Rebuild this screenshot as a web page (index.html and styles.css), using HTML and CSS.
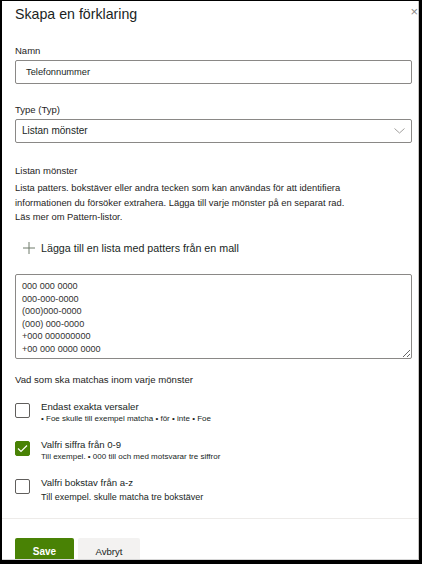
FILE: index.html
```html
<!DOCTYPE html>
<html lang="sv">
<head>
<meta charset="utf-8">
<link rel="stylesheet" href="styles.css">
</head>
<body>
<div class="frame">
  <span class="close">×</span>
  <div class="panel">
    <h1 class="title">Skapa en förklaring</h1>

    <label class="label label-name">Namn</label>
    <div class="field">Telefonnummer</div>

    <label class="label label-type">Type (Typ)</label>
    <div class="field select">
      <span>Listan mönster</span>
      <svg class="chev" width="11" height="6" viewBox="0 0 11 6"><path d="M0.5 0.5 L5.5 5 L10.5 0.5" fill="none" stroke="#a19f9d" stroke-width="1"/></svg>
    </div>

    <div class="label label-list">Listan mönster</div>
    <p class="desc">Lista patters. bokstäver eller andra tecken som kan användas för att identifiera<br>informationen du försöker extrahera. Lägga till varje mönster på en separat rad.<br>Läs mer om Pattern-listor.</p>

    <div class="add">
      <svg class="plus" width="12" height="12" viewBox="0 0 12 12"><path d="M6 0 V12 M0 6 H12" stroke="#6f7a6b" stroke-width="1"/></svg>
      <span>Lägga till en lista med patters från en mall</span>
    </div>

    <textarea class="patterns">000 000 0000
000-000-0000
(000)000-0000
(000) 000-0000
+000 000000000
+00 000 0000 0000</textarea>

    <div class="label label-match">Vad som ska matchas inom varje mönster</div>

    <div class="opt">
      <span class="box"></span>
      <div class="opt-text">
        <div class="opt-title">Endast exakta versaler</div>
        <div class="opt-sub">• Foe skulle till exempel matcha • för • inte • Foe</div>
      </div>
    </div>
    <div class="opt">
      <span class="box checked"><svg width="11" height="9" viewBox="0 0 11 9"><path d="M1 4.5 L4 7.5 L10 1.5" fill="none" stroke="#fff" stroke-width="1.2"/></svg></span>
      <div class="opt-text">
        <div class="opt-title">Valfri siffra från 0-9</div>
        <div class="opt-sub">Till exempel. • 000 till och med motsvarar tre siffror</div>
      </div>
    </div>
    <div class="opt">
      <span class="box"></span>
      <div class="opt-text">
        <div class="opt-title">Valfri bokstav från a-z</div>
        <div class="opt-sub big">Till exempel. skulle matcha tre bokstäver</div>
      </div>
    </div>
  </div>
  <div class="divider"></div>
  <div class="actions">
    <button class="btn primary">Save</button>
    <button class="btn">Avbryt</button>
  </div>
</div>
</body>
</html>
```
FILE: styles.css
```css
html, body {
  margin: 0;
  padding: 0;
}
body {
  background: #000;
  font-family: "Liberation Sans", Arial, sans-serif;
  color: #252423;
  width: 422px;
  height: 564px;
  overflow: hidden;
}
.frame {
  position: relative;
  margin: 1px 3px 0 2px;
  height: 558px;
  background: #fff;
  border-right: 1px solid #c8c6c4;
  border-bottom: 1px solid #d6d6d6;
  overflow: hidden;
}
.close {
  position: absolute;
  right: 0;
  top: 4px;
  font-size: 13px;
  line-height: 14px;
  color: #8a8886;
}
.panel {
  padding: 3px 0 0 13px;
  width: 397px;
}
.title {
  margin: 0;
  font-weight: normal;
  font-size: 14.2px;
  line-height: 20px;
  color: #201f1e;
}
.label {
  display: block;
  font-size: 9.5px;
  line-height: 14px;
  color: #252423;
}
.label-name { margin-top: 20px; }
.label-type { margin-top: 19px; }
.label-list { margin-top: 21px; }
.label-match { margin-top: 14px; font-size: 9.6px; }
.field {
  margin-top: 2px;
  height: 22px;
  box-sizing: content-box;
  border: 1px solid #8a8886;
  border-radius: 2px;
  font-size: 9.3px;
  line-height: 22px;
  padding-left: 10px;
  color: #201f1e;
}
.select {
  display: flex;
  justify-content: space-between;
  align-items: center;
  padding-left: 6px;
  padding-right: 6px;
  font-size: 10px;
}
.chev { display: block; }
.desc {
  margin: 3px 0 0;
  font-size: 9.4px;
  line-height: 14.5px;
  color: #252423;
  white-space: nowrap;
}
.add {
  margin-top: 14.5px;
  height: 18px;
  display: flex;
  align-items: center;
  gap: 6px;
  padding-left: 8px;
  font-size: 10.7px;
  color: #201f1e;
}
.plus { display: block; }
.patterns {
  display: block;
  margin: 17px 0 0;
  width: 397px;
  height: 85px;
  box-sizing: border-box;
  border: 1px solid #8a8886;
  border-radius: 2px;
  padding: 5px 6px 4px;
  font-family: "Liberation Sans", Arial, sans-serif;
  font-size: 9.1px;
  line-height: 12.6px;
  color: #323130;
  resize: vertical;
  overflow: hidden;
}
.opt {
  display: flex;
  gap: 11px;
  margin-top: 13px;
}
.opt + .opt { margin-top: 13px; }
.label-match + .opt { margin-top: 13px; }
.box {
  margin-top: 3px;
  width: 15px;
  height: 15px;
  box-sizing: border-box;
  border: 1px solid #605e5c;
  border-radius: 2px;
  flex: none;
  display: flex;
  align-items: center;
  justify-content: center;
}
.box.checked {
  background: #498205;
  border-color: #498205;
}
.opt-title {
  font-size: 9.6px;
  line-height: 13px;
  color: #201f1e;
}
.opt-sub {
  font-size: 8px;
  line-height: 12px;
  color: #201f1e;
}
.opt-sub.big {
  font-size: 9px;
  line-height: 14px;
  margin-top: 1px;
}
.divider {
  margin-top: 14px;
  height: 1px;
  background: #edebe9;
}
.actions {
  display: flex;
  gap: 4px;
  padding: 19px 0 0 13px;
}
.btn {
  height: 26px;
  border: none;
  border-radius: 2px;
  background: #f3f2f1;
  font-family: "Liberation Sans", Arial, sans-serif;
  font-size: 9.6px;
  color: #201f1e;
  width: 62px;
  padding: 0;
}
.btn.primary {
  width: 59px;
  background: #498205;
  color: #fff;
  font-weight: bold;
  font-size: 10px;
}
```
